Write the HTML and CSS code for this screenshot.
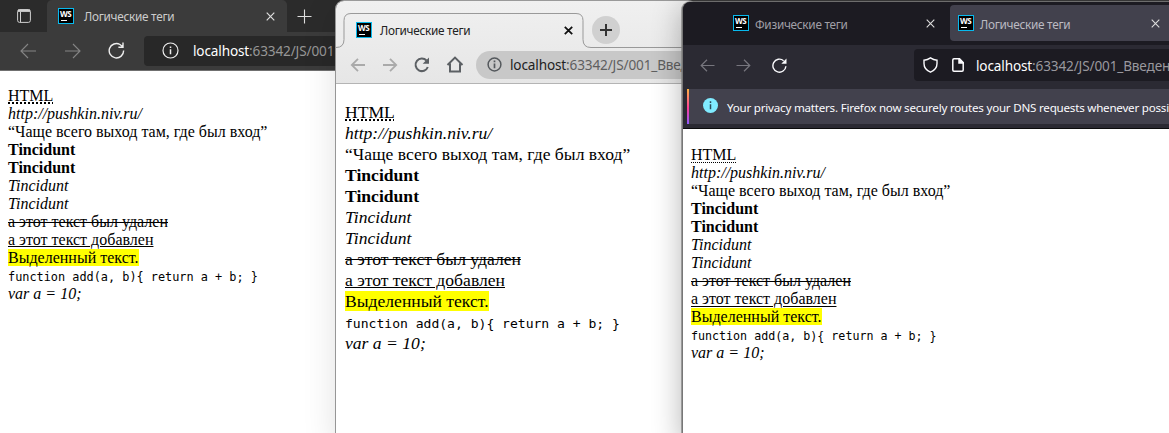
FILE: index.html
```
<!DOCTYPE html>
<html lang="ru">
<head>
<meta charset="utf-8">
<title>Логические теги</title>
<link rel="stylesheet" href="styles.css">
</head>
<body>
<div class="desktop">
  <section class="window edge">
    <header class="edge-tabs">
      <svg class="edge-panel" width="14" height="14" viewBox="0 0 14 14" fill="none" stroke="#d0d0d0"><rect x=".6" y=".6" width="12.8" height="12.8" rx="2"/><path d="M1 2.3h12M3.5 3v10" /><path d="M1 1.5h12" stroke-width="2"/></svg>
      <div class="edge-tab"><span class="ws"><b>WS</b></span><span class="tab-title">Логические теги</span>
        <svg class="push" width="9" height="9" viewBox="0 0 9 9" stroke="#ddd" stroke-width="1.2"><path d="M.7.7l7.6 7.6M8.3.7L.7 8.3"/></svg></div>
      <svg class="edge-plus" width="15" height="15" viewBox="0 0 15 15" stroke="#ddd" stroke-width="1.1"><path d="M7.5 0.5v14M.5 7.5h14"/></svg>
    </header>
    <div class="edge-bar">
      <svg width="17" height="16" viewBox="0 0 17 16" fill="none" stroke="#858585" stroke-width="1.1"><path d="M16 8H1M8 1L1 8l7 7"/></svg>
      <svg width="17" height="16" viewBox="0 0 17 16" fill="none" stroke="#858585" stroke-width="1.1"><path d="M1 8h15M9 1l7 7-7 7"/></svg>
      <svg width="17" height="17" viewBox="0 0 17 17" fill="none" stroke="#eee" stroke-width="1.4"><path d="M15.6 8.5A7.2 7.2 0 1 1 12 2.5l2.5 2M15 .5v4.7h-4.6"/></svg>
      <div class="edge-url"><svg width="17" height="17" viewBox="0 0 17 17" fill="none" stroke="#eee" stroke-width="1.2"><circle cx="8.5" cy="8.5" r="7.5"/><path d="M8.5 7.2v5M8.5 4.5v1.5" stroke-width="1.5"/></svg><span class="address"><em>localhost</em>:63342/JS/001</span></div>
    </div>
    <main class="page">
      <p><abbr>HTML</abbr></p><p><i>http://pushkin.niv.ru/</i></p><p class="quote">“Чаще всего выход там, где был вход”</p>
      <p><b>Tincidunt</b></p><p><b>Tincidunt</b></p><p><i>Tincidunt</i></p><p><i>Tincidunt</i></p>
      <p><del>а этот текст был удален</del></p><p><ins>а этот текст добавлен</ins></p><p><mark>Выделенный текст.</mark></p>
      <p><code>function add(a, b){ return a + b; }</code></p><p><i>var a = 10;</i></p>
    </main>
  </section>

  <section class="window chrome">
    <header class="chrome-tabs">
      <svg class="chrome-outline" width="347" height="36" viewBox="0 0 347 36" fill="none" stroke="#999"><path d="M0 34.5h1q8 0 8-8v-19q0-7 7-7h225q7 0 7 7v19q0 8 8 8h91"/></svg>
      <div class="chrome-tab"><span class="ws"><b>WS</b></span><span class="tab-title">Логические теги</span>
        <svg class="push" width="9" height="9" viewBox="0 0 9 9" stroke="#111" stroke-width="1.8"><path d="M.8.8l7.4 7.4M8.2.8L.8 8.2"/></svg></div>
      <span class="chrome-new"><svg width="12" height="12" viewBox="0 0 12 12" stroke="#333" stroke-width="2"><path d="M6 0v12M0 6h12"/></svg></span>
    </header>
    <div class="chrome-bar">
      <svg width="16" height="14" viewBox="0 0 16 14" fill="none" stroke="#aaa" stroke-width="1.8"><path d="M15 7H2M8 .8L1.8 7 8 13.2"/></svg>
      <svg width="16" height="14" viewBox="0 0 16 14" fill="none" stroke="#aaa" stroke-width="1.8"><path d="M1 7h13M8 .8L14.2 7 8 13.2"/></svg>
      <svg width="16" height="16" viewBox="0 0 16 16" fill="none" stroke="#5c6064" stroke-width="2"><path d="M13.8 10A6.3 6.3 0 1 1 12.5 3.5"/><path d="M15 .5v6.3H8.7z" fill="#5c6064" stroke="none"/></svg>
      <svg width="18" height="17" viewBox="0 0 18 17" fill="none" stroke="#5c6064" stroke-width="2"><path d="M1.5 9L9 1.6 16.5 9M4 7.5V15.5h10V7.5"/></svg>
      <div class="chrome-url"><svg width="15" height="15" viewBox="0 0 15 15" fill="none" stroke="#55595d" stroke-width="1.5"><circle cx="7.5" cy="7.5" r="6.4"/><path d="M7.5 6.5v4.7M7.5 3.6v1.7" stroke-width="1.7"/></svg><span class="address"><em>localhost</em>:63342/JS/001_Введ</span></div>
    </div>
    <main class="page">
      <p><abbr>HTML</abbr></p><p><i>http://pushkin.niv.ru/</i></p><p class="quote">“Чаще всего выход там, где был вход”</p>
      <p><b>Tincidunt</b></p><p><b>Tincidunt</b></p><p><i>Tincidunt</i></p><p><i>Tincidunt</i></p>
      <p><del>а этот текст был удален</del></p><p><ins>а этот текст добавлен</ins></p><p><mark>Выделенный текст.</mark></p>
      <p><code>function add(a, b){ return a + b; }</code></p><p><i>var a = 10;</i></p>
    </main>
  </section>

  <section class="window firefox">
    <header class="fox-tabs">
      <div class="fox-tab idle"><span class="ws"><b>WS</b></span><span class="tab-title">Физические теги</span>
        <svg class="push" width="9" height="9" viewBox="0 0 9 9" stroke="#ddd" stroke-width="1.1"><path d="M.7.7l7.6 7.6M8.3.7L.7 8.3"/></svg></div>
      <div class="fox-tab active"><span class="ws"><b>WS</b></span><span class="tab-title">Логические теги</span>
        <svg class="push" width="9" height="9" viewBox="0 0 9 9" stroke="#ddd" stroke-width="1.1"><path d="M.7.7l7.6 7.6M8.3.7L.7 8.3"/></svg></div>
    </header>
    <div class="fox-bar">
      <svg width="15" height="13" viewBox="0 0 15 13" fill="none" stroke="#77767e" stroke-width="1.2"><path d="M14.5 6.5H1M7 .8L1.2 6.5 7 12.2"/></svg>
      <svg width="15" height="13" viewBox="0 0 15 13" fill="none" stroke="#77767e" stroke-width="1.2"><path d="M.5 6.5H14M8 .8l5.8 5.7L8 12.2"/></svg>
      <svg width="15" height="15" viewBox="0 0 15 15" fill="none" stroke="#fbfbfe" stroke-width="1.4"><path d="M13.9 8.2A6.5 6.5 0 1 1 11.6 2.7"/><path d="M14.5.5v5.2H9.3z" fill="#fbfbfe" stroke="none"/></svg>
      <div class="fox-url">
        <svg width="15" height="16" viewBox="0 0 15 16" fill="none" stroke="#fbfbfe" stroke-width="1.4"><path d="M7.5.8Q10.5 2.8 14 3.2V6.5Q14 12.5 7.5 15.2Q1 12.5 1 6.5V3.2Q4.5 2.8 7.5.8z"/></svg>
        <svg width="12" height="14" viewBox="0 0 12 14" fill="none" stroke="#fbfbfe" stroke-width="1.5"><path d="M.8 2q0-1.2 1.2-1.2h5.5l3.7 3.7V12q0 1.2-1.2 1.2H2Q.8 13.2.8 12z"/><path d="M7 .8v4.2h4.2z" fill="#fbfbfe"/></svg>
        <span class="address"><em>localhost</em>:63342/JS/001_Введен</span></div>
    </div>
    <div class="fox-notice"><svg width="15" height="15" viewBox="0 0 15 15"><circle cx="7.5" cy="7.5" r="7.5" fill="#80ebff"/><path d="M7.5 6.3v5M7.5 3.3v1.7" stroke="#2b4a58" stroke-width="1.5"/></svg><span class="notice-text">Your privacy matters. Firefox now securely routes your DNS requests whenever possi</span></div>
    <main class="page">
      <p><abbr>HTML</abbr></p><p><i>http://pushkin.niv.ru/</i></p><p class="quote">“Чаще всего выход там, где был вход”</p>
      <p><b>Tincidunt</b></p><p><b>Tincidunt</b></p><p><i>Tincidunt</i></p><p><i>Tincidunt</i></p>
      <p><del>а этот текст был удален</del></p><p><ins>а этот текст добавлен</ins></p><p><mark>Выделенный текст.</mark></p>
      <p><code>function add(a, b){ return a + b; }</code></p><p><i>var a = 10;</i></p>
    </main>
  </section>
</div>
</body>
</html>
```
FILE: styles.css
```
* { box-sizing: border-box; }
body { margin: 0; font-family: "Noto Sans", sans-serif; }
svg { display: block; flex: none; }
.desktop { position: relative; width: 1169px; height: 433px; overflow: hidden; background: #3c3c3c; }
.window { position: absolute; display: flex; flex-direction: column; overflow: hidden; white-space: nowrap; }
.push { margin-left: auto; }
.ws { flex: none; width: 16px; height: 16px; background: #000; border: 1px solid #08b9ed; padding: 1px 1px; font-size: 8px; line-height: 8px; color: #fff; }
.ws b { display: block; letter-spacing: -.4px; }
.ws::after { content: ""; display: block; width: 6px; height: 1px; margin: 2px 0 0 1px; background: #fff; }
.tab-title { font-size: 11.8px; letter-spacing: -.28px; margin-left: 10px; }
.address em { font-style: normal; }
.address { font-size: 13.6px; letter-spacing: -.15px; }

.page { flex: 1; background: #fff; color: #000; font-family: "Liberation Serif", serif; font-size: 16px; line-height: 18px; }
.page p { margin: 0; }
.page abbr { text-decoration: underline dotted 1.5px; text-decoration-skip-ink: none; text-underline-offset: 1px; }
.page mark { background: #ff0; color: #000; }
.page code { display: block; font-family: "DejaVu Sans Mono", monospace; font-size: 11.87px; padding-top: 1px; height: 18px; }

.edge { left: 0; top: 0; width: 340px; height: 433px; background: #3b3b3b; }
.edge-tabs { display: flex; align-items: center; height: 32px; background: #2b2b2b; }
.edge-panel { margin-left: 17px; }
.edge-tab { display: flex; align-items: center; width: 240px; height: 32px; margin-left: 16px; padding: 0 12px 0 11px; background: #3b3b3b; border-radius: 5px 5px 0 0; color: #ccc; }
.edge-plus { margin-left: 10px; }
.edge-bar { display: flex; align-items: center; height: 39px; padding: 0 0 1px 20px; gap: 27px; border-bottom: 1px solid #707070; }
.edge-url { display: flex; align-items: center; flex: 1; height: 30px; margin-left: -8px; padding-left: 18px; gap: 14px; background: #282828; border-radius: 4px 0 0 4px; color: #969696; }
.edge-url em { color: #fff; }
.edge .page { padding: 16px 8px 0; }

.chrome { left: 336px; top: 1px; width: 360px; height: 440px; background: linear-gradient(#f0f0f0, #e6e6e6 83px); border-radius: 8px; box-shadow: 0 8px 34px rgba(0,0,0,.13), 0 0 0 1px #a0a0a0; }
.chrome-tabs { position: relative; display: flex; align-items: center; height: 46px; padding: 12px 0 0 20px; }
.chrome-outline { position: absolute; left: 0; top: 12px; }
.chrome-outline path { transform: translateX(-1px); }
.chrome-tab { display: flex; align-items: center; width: 217px; color: #222; }
.chrome-tab .tab-title { margin-left: 8px; }
.chrome-new { display: grid; place-items: center; width: 28px; height: 28px; margin-left: 19px; border-radius: 50%; background: #d0d0d0; }
.chrome-bar { display: flex; align-items: center; height: 37px; padding: 0 0 1px 14px; gap: 16px; border-bottom: 1px solid #b4b4b4; }
.chrome-url { display: flex; align-items: center; flex: 1; height: 28px; margin-left: -4px; padding-left: 11px; gap: 8px; border-radius: 14px 0 0 14px; background: #c8c8c8; color: #5f5f5f; }
.chrome-url em { color: #222; }
.chrome .page { padding: 18px 9px 0; font-size: 17.6px; line-height: 21px; }
.chrome .page code { font-size: 13.06px; height: 21px; }

.firefox { left: 682px; top: 2px; width: 500px; height: 440px; background: #2b2a33; border-radius: 8px 0 0; border-left: 1px solid #777; box-shadow: 0 4px 30px rgba(0,0,0,.3), 0 0 0 1px rgba(150,150,150,.7); }
.fox-tabs { display: flex; align-items: center; height: 43px; background: #1c1b22; padding-left: 42px; color: #a09fa6; }
.fox-tab { display: flex; flex: none; align-items: center; height: 36px; margin-top: -1px; }
.fox-tab .tab-title { margin-left: 6px; padding-top: 1px; }
.idle { width: 210px; padding: 0 0 0 8px; }
.active { width: 240px; margin-left: 15px; padding: 0 30px 0 8px; border-radius: 4px; background: #42414d; color: #bbbac2; }
.fox-bar { display: flex; align-items: center; height: 40px; padding-left: 17px; gap: 21px; }
.fox-url { display: flex; align-items: center; flex: 1; height: 32px; margin-left: 106px; padding-left: 9px; border-radius: 4px 0 0 4px; background: #1c1b22; gap: 14px; color: #99989e; }
.fox-url em { color: #fff; }
.fox-url .address { margin-left: -2px; }
.fox-notice { display: flex; align-items: center; height: 35px; margin: 4px 0 4px 4px; padding-left: 16px; gap: 9px; color: #fbfbfe; background: linear-gradient(#ffb340, #ff3d9a 55%, #9059ff) left / 2px 100% no-repeat #42414d; }
.fox-notice svg { margin-bottom: 3px; }
.notice-text { font-size: 11.6px; letter-spacing: -.22px; padding-top: 2px; }
.firefox .page { padding: 17px 8px 0; border-top: 1px solid #0c0c0d; }
.firefox .page abbr { text-decoration-thickness: 1px; text-underline-offset: 2px; }
.firefox .page ins { text-underline-offset: 2px; }
.firefox .page code { font-size: 11.67px; }
```
